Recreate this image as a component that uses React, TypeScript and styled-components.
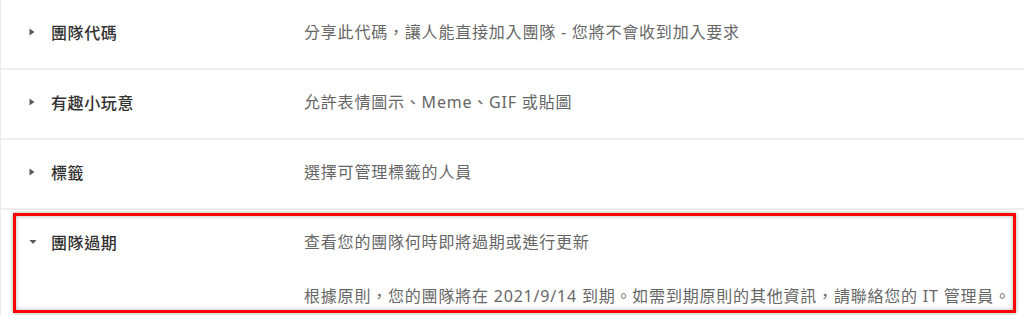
import React from "react";
import styled, { createGlobalStyle } from "styled-components";

const Global = createGlobalStyle`
  html, body { margin: 0; padding: 0; background: #ffffff; }
  body {
    font-family: "Noto Sans", "Noto Sans CJK TC", sans-serif;
    width: 1024px;
    height: 316px;
    overflow: hidden;
  }
`;

const List = styled.div`
  display: flex;
  flex-direction: column;
  border-left: 1px solid #ececec;
  background: #ffffff;
`;

const Row = styled.div<{ $last?: boolean }>`
  position: relative;
  display: grid;
  grid-template-columns: 22px 253px 1fr;
  align-items: start;
  padding: 20px 0 ${(p) => (p.$last ? "8px" : "24px")} 28px;
  border-bottom: ${(p) => (p.$last ? "none" : "2px solid #efefef")};
`;

const Caret = styled.span`
  display: flex;
  align-items: center;
  height: 24px;
  color: #5a5a5a;
`;

const Label = styled.div`
  font-family: "Noto Sans CJK TC", sans-serif;
  font-size: 16px;
  line-height: 24px;
  font-weight: 500;
  color: #323130;
  letter-spacing: 0.6px;
`;

const Desc = styled.div`
  display: flex;
  flex-direction: column;
  gap: 30px;
`;

const DescLine = styled.div`
  font-family: "Noto Sans", "Noto Sans CJK TC", sans-serif;
  font-size: 16px;
  line-height: 24px;
  font-weight: 400;
  color: #666666;
  letter-spacing: 0.8px;
  white-space: nowrap;
`;

const Highlight = styled.div`
  position: absolute;
  top: 3px;
  left: 12px;
  width: 1003px;
  height: 100px;
  box-sizing: border-box;
  border: 3px solid #ff0000;
  box-shadow: 0 0 4px rgba(0, 0, 0, 0.35), inset 0 0 4px rgba(0, 0, 0, 0.3);
  pointer-events: none;
`;

const RightTri = () => (
  <svg width="6" height="8" viewBox="0 0 6 8">
    <path d="M0.5 0.5 L5.5 4 L0.5 7.5 Z" fill="currentColor" />
  </svg>
);

const DownTri = () => (
  <svg width="8" height="6" viewBox="0 0 8 6">
    <path d="M0.5 1 L7.5 1 L4 5 Z" fill="currentColor" />
  </svg>
);

const rows = [
  { label: "團隊代碼", lines: ["分享此代碼，讓人能直接加入團隊 - 您將不會收到加入要求"] },
  { label: "有趣小玩意", lines: ["允許表情圖示、Meme、GIF 或貼圖"] },
  { label: "標籤", lines: ["選擇可管理標籤的人員"] },
];

export default function App() {
  return (
    <>
      <Global />
      <List>
        {rows.map((r) => (
          <Row key={r.label}>
            <Caret>
              <RightTri />
            </Caret>
            <Label>{r.label}</Label>
            <Desc>
              {r.lines.map((l) => (
                <DescLine key={l}>{l}</DescLine>
              ))}
            </Desc>
          </Row>
        ))}
        <Row $last>
          <Caret>
            <DownTri />
          </Caret>
          <Label>團隊過期</Label>
          <Desc>
            <DescLine>查看您的團隊何時即將過期或進行更新</DescLine>
            <DescLine>
              根據原則，您的團隊將在 2021/9/14 到期。如需到期原則的其他資訊，請聯絡您的 IT 管理員。
            </DescLine>
          </Desc>
          <Highlight />
        </Row>
      </List>
    </>
  );
}
